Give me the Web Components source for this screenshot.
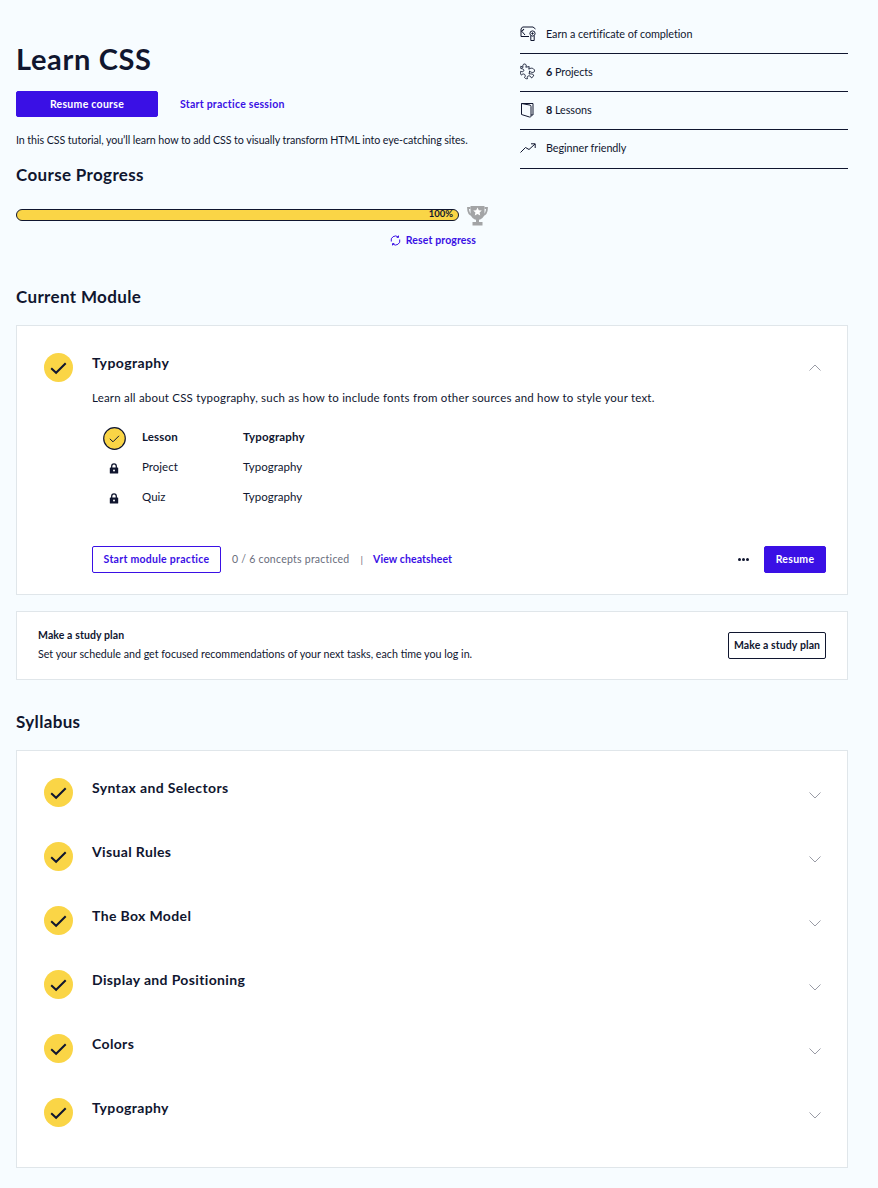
<!DOCTYPE html>
<html lang="en">
<head>
<meta charset="utf-8">
<title>Learn CSS</title>
<style>
  html, body { margin: 0; padding: 0; }
  body {
    background: #f7fcff;
    color: #10162f;
    font-family: Lato, "Liberation Sans", sans-serif;
    font-size: 11px;
  }
</style>
</head>
<body>
<course-page>
  <course-header></course-header>

  <section-title style="margin-top:41px">Current Module</section-title>
  <current-module></current-module>
  <study-plan></study-plan>

  <section-title style="margin-top:32px">Syllabus</section-title>
  <panel-card style="margin-top:18px;padding:10px 0 22px">
    <module-row>Syntax and Selectors</module-row>
    <module-row>Visual Rules</module-row>
    <module-row>The Box Model</module-row>
    <module-row>Display and Positioning</module-row>
    <module-row>Colors</module-row>
    <module-row>Typography</module-row>
  </panel-card>
</course-page>

<script>
const CHECK = `<svg viewBox="0 0 29 29" width="29" height="29"><circle cx="14.5" cy="14.5" r="14.5" fill="#fad546"/><path d="M7.2 15.2l4.9 4.6 9.6-9.6" fill="none" stroke="#10162f" stroke-width="2"/></svg>`;

// Small helper, every element here is just a template in an open shadow root
function component(tagName, html) {
    const template = document.createElement('template');
    template.innerHTML = html;
    customElements.define(tagName, class extends HTMLElement {
        connectedCallback() {
            if (!this.shadowRoot) {
                this.attachShadow({ mode: 'open' });
                this.shadowRoot.appendChild(template.content.cloneNode(true));
            }
        }
    });
}

component('course-page', `
<style>
  :host { display: block; padding: 0 30px 20px 16px; }
</style>
<slot></slot>`);

component('section-title', `
<style>
  :host { display: block; font-size: 17px; line-height: 20px; font-weight: 700; letter-spacing: .35px; color: #10162f; }
</style>
<slot></slot>`);

component('panel-card', `
<style>
  :host { display: block; background: #fff; border: 1px solid #e0e6ea; }
</style>
<slot></slot>`);

component('action-button', `
<style>
  :host { display: inline-flex; align-items: center; justify-content: center; box-sizing: border-box; height: 27px; padding-bottom: 1px; border-radius: 2px; font-size: 10.5px; font-weight: 700; letter-spacing: .28px; white-space: nowrap; border: 1px solid #3a10e5; }
  :host([kind="solid"]) { background: #3a10e5; color: #fff; }
  :host([kind="outline"]) { background: #fff; color: #3a10e5; }
  :host([kind="dark"]) { background: #fff; color: #10162f; border-color: #10162f; }
</style>
<slot></slot>`);

component('text-link', `
<style>
  :host { display: inline-block; color: #3a10e5; font-size: 10.5px; font-weight: 700; letter-spacing: .25px; white-space: nowrap; }
</style>
<slot></slot>`);

component('course-stat', `
<style>
  :host { display: flex; align-items: center; box-sizing: border-box; height: 38.3px; padding-bottom: 2px; border-bottom: 1px solid #10162f; font-size: 10.8px; letter-spacing: -.05px; }
  .icon { width: 26px; height: 20px; flex: none; display: flex; align-items: center; }
  ::slotted(b) { font-weight: 700; }
</style>
<span class="icon"><slot name="icon"></slot></span>
<span><slot></slot></span>`);

component('progress-meter', `
<style>
  :host { display: block; }
  .row { display: flex; align-items: center; gap: 8px; }
  .track { flex: 0 0 443px; box-sizing: border-box; height: 12px; border: 1px solid #10162f; border-radius: 6px; background: #fad546; font-size: 9.5px; font-weight: 700; line-height: 8px; text-align: right; padding-right: 5px; }
  .reset { display: flex; align-items: center; justify-content: flex-end; gap: 5px; width: 460px; margin-top: 8px; }
  .reset text-link { letter-spacing: .12px; }
  svg.trophy { margin-top: 1px; }
</style>
<div class="row">
  <div class="track">100%</div>
  <svg class="trophy" width="21" height="21" viewBox="0 0 21 21">
    <path d="M3.500 1h14v7a7 7 0 0 1-14 0z" fill="#a3a4a6"/>
    <path d="M3.500 3H1c0 4 1 6.500 4.500 7.500M17.500 3H20c0 4-1 6.500-4.500 7.500" fill="none" stroke="#a3a4a6" stroke-width="1.800"/>
    <path d="M9 14h3v3.500H9zM5.500 17h10v3.500h-10z" fill="#a3a4a6"/>
    <path d="M10.500 2.500l1.300 2.700 3 .4-2.200 2 .6 3-2.700-1.500-2.700 1.500.6-3-2.200-2 3-.4z" fill="#fff"/>
  </svg>
</div>
<div class="reset">
  <svg width="11" height="11" viewBox="0 0 11 11" fill="none" stroke="#3a10e5" stroke-width="1">
    <path d="M1.300 6.500A4.300 4.300 0 0 1 8.200 2"/><path d="M9.700 4.500A4.300 4.300 0 0 1 2.800 9"/>
    <path d="M8.500 .6V2.400H6.700M2.500 10.400V8.600H4.300"/>
  </svg>
  <text-link>Reset progress</text-link>
</div>`);

component('course-header', `
<style>
  :host { display: grid; grid-template-columns: 504px 328px; }
  h1 { margin: 39px 0 0; font-size: 29px; line-height: 40px; font-weight: 700; letter-spacing: .65px; color: #10162f; }
  .actions { display: flex; align-items: center; gap: 22px; margin-top: 12px; }
  .resume { width: 142px; height: 26px; }
  p { margin: 16px 0 0; font-size: 10.7px; line-height: 14px; letter-spacing: -.08px; }
  section-title { margin-top: 18px; }
  progress-meter { margin-top: 19px; }
  .stats { padding-top: 15.4px; }
</style>
<div>
  <h1>Learn CSS</h1>
  <div class="actions">
    <action-button class="resume" kind="solid">Resume course</action-button>
    <text-link>Start practice session</text-link>
  </div>
  <p>In this CSS tutorial, you’ll learn how to add CSS to visually transform HTML into eye-catching sites.</p>
  <section-title>Course Progress</section-title>
  <progress-meter></progress-meter>
</div>
<div class="stats">
  <course-stat>
    <svg slot="icon" width="17" height="15" viewBox="0 0 17 15" fill="none" stroke="#10162f" stroke-width="1">
      <path d="M9 10.500H1V3L2.500 1H13L15.500 3"/><path d="M1 5.500L4 3 2 5.500 5 9"/>
      <circle cx="12.500" cy="7.500" r="2.600"/><circle cx="12.500" cy="7.500" r=".7" fill="#10162f"/>
      <path d="M10.800 10v4.500h3.400V10"/>
    </svg>
    Earn a certificate of completion
  </course-stat>
  <course-stat>
    <svg slot="icon" width="16" height="17" viewBox="0 0 16 17" fill="none" stroke="#10162f" stroke-width=".9">
      <path d="M.8 3.200L3 4.500C2.300 2 3.400.8 4.800 1c1.300.2 2 1.500 1 3.200l3.400-.6-.4 2.600c2-1.300 3.200-1.300 4.600-.4 1.700 1.100 1.500 3.200-.2 3.600-1.300.3-2.500-.3-3.600-1.400l-.5 3c2-.3 3.600 0 4.600 1-.2 1.300-1 2.300-2.300 2.900-.4-1.400-1.400-2.200-2.800-2-1.300.2-1.700 1.300-1.100 2.800-1.300.2-2.300-.2-3-1.200 1-1.200 1-2.400 0-3.200-1-.7-2.100-.3-3.100.8C.5 11 .2 9.600.7 8.300c1.500.7 2.800.5 3.100-.6.300-1.200-.8-2-3-2.200z"/>
    </svg>
    <b>6</b>&nbsp;Projects
  </course-stat>
  <course-stat>
    <svg slot="icon" width="15" height="16" viewBox="0 0 15 16" fill="none" stroke="#10162f" stroke-width="1">
      <path d="M1.500 1.500h11.500v11.500h-2"/><path d="M1.500 1.500v11l8 2.500c1 .3 1.500-.2 1.500-1V4.500c0-.8-.4-1.200-1-1.400z"/>
    </svg>
    <b>8</b>&nbsp;Lessons
  </course-stat>
  <course-stat>
    <svg slot="icon" width="16" height="10" viewBox="0 0 16 10" fill="none" stroke="#10162f" stroke-width="1">
      <path d="M.5 9.500L5.500 4.500 9 6.500 15 1"/><path d="M11 .8h4.200V5"/>
    </svg>
    Beginner friendly
  </course-stat>
</div>`);

component('current-module', `
<style>
  :host { display: block; box-sizing: border-box; margin-top: 18px; height: 270px; background: #fff; border: 1px solid #e0e6ea; }
  .head { display: flex; padding: 27px 26px 0 27px; height: 29px; }
  .head svg.check { flex: none; margin-right: 19px; }
  .title { flex: 1; font-size: 14px; line-height: 18px; font-weight: 700; letter-spacing: .4px; margin-top: 1px; }
  .chev { margin-top: 11px; }
  .body { padding-left: 75px; }
  p { margin: 8px 0 0; font-size: 11.5px; line-height: 16px; letter-spacing: .2px; }
  .lessons { margin: 15px 0 0 10px; display: grid; grid-template-columns: 24px 85px auto; column-gap: 16px; grid-auto-rows: 30px; align-items: center; justify-content: start; font-size: 11.5px; letter-spacing: .02px; }
  .lessons b { font-weight: 700; letter-spacing: .15px; }
  .ic { display: flex; justify-content: center; margin-top: 4px; }
  .foot { display: flex; align-items: center; margin: 35px 21px 0 0; }
  .foot .start { width: 129px; }
  .count { margin: 0 0 2px 11px; color: #696d7c; font-size: 10.5px; letter-spacing: .25px; }
  .sep { margin: 0 10px 2px 11px; color: #696d7c; font-size: 10px; }
  .foot text-link { letter-spacing: .1px; margin-bottom: 2px; }
  .dots { margin-left: auto; margin-right: 15px; display: flex; gap: 1px; }
  .dots i { width: 3px; height: 3px; border-radius: 50%; background: #10162f; }
  .resume { width: 62px; }
</style>
<div class="head">
  ${CHECK.replace('<svg ', '<svg class="check" ')}
  <div class="title">Typography</div>
  <svg class="chev" width="12" height="7" viewBox="0 0 12 7" fill="none" stroke="#9a9ca6" stroke-width="1"><path d="M.5 6.500L6 1l5.500 5.500"/></svg>
</div>
<div class="body">
  <p>Learn all about CSS typography, such as how to include fonts from other sources and how to style your text.</p>
  <div class="lessons">
    <div class="ic"><svg width="23" height="23" viewBox="0 0 23 23"><circle cx="11.500" cy="11.500" r="10.800" fill="#fad546" stroke="#10162f" stroke-width="1.200"/><path d="M6.800 11.800l3.200 3 6-6" fill="none" stroke="#10162f" stroke-width="1"/></svg></div>
    <b>Lesson</b><b>Typography</b>
    <div class="ic"><lock-icon></lock-icon></div>
    <span>Project</span><span>Typography</span>
    <div class="ic"><lock-icon></lock-icon></div>
    <span>Quiz</span><span>Typography</span>
  </div>
  <div class="foot">
    <action-button class="start" kind="outline">Start module practice</action-button>
    <span class="count">0 / 6 concepts practiced</span>
    <span class="sep">|</span>
    <text-link>View cheatsheet</text-link>
    <span class="dots"><i></i><i></i><i></i></span>
    <action-button class="resume" kind="solid">Resume</action-button>
  </div>
</div>`);

component('lock-icon', `
<style>
  :host { display: inline-flex; }
</style>
<svg width="10" height="11" viewBox="0 0 10 11">
  <path d="M2.700 5V3.200a2.300 2.300 0 0 1 4.600 0V5" fill="none" stroke="#10162f" stroke-width="1.300"/>
  <rect x=".8" y="4.500" width="8.400" height="6" rx=".6" fill="#10162f"/>
  <circle cx="5" cy="7.500" r="1" fill="#fff"/>
</svg>`);

component('study-plan', `
<style>
  :host { display: flex; align-items: center; justify-content: space-between; box-sizing: border-box; margin-top: 16px; height: 69px; padding: 0 21px; background: #fff; border: 1px solid #e0e6ea; }
  .copy { margin-top: -2px; }
  .copy b { display: block; font-size: 10.5px; line-height: 14px; font-weight: 700; letter-spacing: .1px; }
  .copy span { display: block; margin-top: 5px; font-size: 10.7px; line-height: 14px; }
  action-button { width: 98px; letter-spacing: .1px; }
</style>
<div class="copy">
  <b>Make a study plan</b>
  <span>Set your schedule and get focused recommendations of your next tasks, each time you log in.</span>
</div>
<action-button kind="dark">Make a study plan</action-button>`);

component('module-row', `
<style>
  :host { display: flex; box-sizing: border-box; height: 64px; padding: 17px 26px 0 27px; }
  svg.check { flex: none; margin-right: 19px; }
  .title { flex: 1; font-size: 14px; line-height: 18px; font-weight: 700; letter-spacing: .36px; margin-top: 1px; }
  .chev { margin-top: 14px; }
</style>
${CHECK.replace('<svg ', '<svg class="check" ')}
<div class="title"><slot></slot></div>
<svg class="chev" width="12" height="7" viewBox="0 0 12 7" fill="none" stroke="#9a9ca6" stroke-width="1"><path d="M.5 .5L6 6l5.500-5.500"/></svg>`);
</script>
</body>
</html>
